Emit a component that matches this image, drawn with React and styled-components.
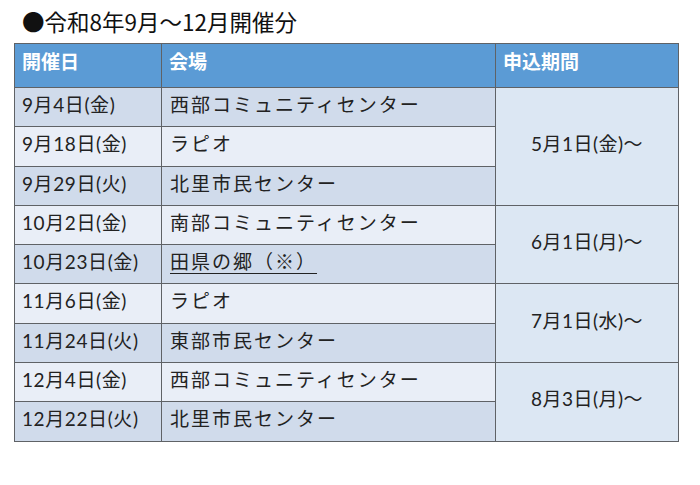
import React from "react";
import styled, { createGlobalStyle } from "styled-components";

const GlobalStyle = createGlobalStyle`
  body {
    margin: 0;
    background: #fff;
    font-family: "Noto Sans CJK JP", sans-serif;
  }
`;

const Page = styled.div`
  padding: 5px 0 0 14px;
  width: 700px;
  box-sizing: border-box;
`;

const Heading = styled.h1`
  margin: 0 0 6px 8px;
  font-size: 22.5px;
  line-height: 32px;
  font-weight: 400;
  color: #111;
`;

const Table = styled.table`
  border-collapse: collapse;
  width: 664px;
  table-layout: fixed;
  border: 1px solid #5f6266;
`;

const Th = styled.th`
  background: #5b9bd5;
  color: #fff;
  font-size: 19px;
  font-weight: 700;
  text-align: left;
  vertical-align: top;
  height: 44px;
  padding: 3px 0 0 7px;
  box-sizing: border-box;
  border: 1px solid #5f6266;
`;

const Td = styled.td`
  background: ${(p) => (p.$dark ? "#d0dbeb" : "#e9eef7")};
  color: #222;
  font-size: 19px;
  text-align: left;
  vertical-align: top;
  height: 39.3px;
  padding: 2px 0 0 7px;
  box-sizing: border-box;
  border: 1px solid #5f6266;
  white-space: nowrap;
`;

const DateCell = styled(Td)`
  font-family: Lato, "Noto Sans CJK JP", sans-serif;
  letter-spacing: 0.6px;
`;

const VenueCell = styled(Td)`
  letter-spacing: 2px;
  padding-left: 8px;
`;

const PeriodCell = styled.td`
  background: #dce7f3;
  color: #222;
  font-family: Lato, "Noto Sans CJK JP", sans-serif;
  font-size: 19px;
  text-align: center;
  vertical-align: middle;
  padding: 0 0 8px;
  border: 1px solid #5f6266;
  letter-spacing: 0.5px;
`;

const Underlined = styled.span`
  text-decoration: underline;
  text-underline-offset: 4px;
  text-decoration-thickness: 1px;
`;

const groups = [
  {
    period: "5月1日(金)～",
    rows: [
      ["9月4日(金)", "西部コミュニティセンター"],
      ["9月18日(金)", "ラピオ"],
      ["9月29日(火)", "北里市民センター"],
    ],
  },
  {
    period: "6月1日(月)～",
    rows: [
      ["10月2日(金)", "南部コミュニティセンター"],
      ["10月23日(金)", "田県の郷（※）", true],
    ],
  },
  {
    period: "7月1日(水)～",
    rows: [
      ["11月6日(金)", "ラピオ"],
      ["11月24日(火)", "東部市民センター"],
    ],
  },
  {
    period: "8月3日(月)～",
    rows: [
      ["12月4日(金)", "西部コミュニティセンター"],
      ["12月22日(火)", "北里市民センター"],
    ],
  },
];

export default function App() {
  let index = 0;
  return (
    <Page>
      <GlobalStyle />
      <Heading>●令和8年9月～12月開催分</Heading>
      <Table>
        <colgroup>
          <col style={{ width: 147 }} />
          <col style={{ width: 334 }} />
          <col style={{ width: 183 }} />
        </colgroup>
        <thead>
          <tr>
            <Th>開催日</Th>
            <Th>会場</Th>
            <Th>申込期間</Th>
          </tr>
        </thead>
        <tbody>
          {groups.map((g) =>
            g.rows.map(([date, venue, note], i) => {
              const dark = index % 2 === 0;
              index += 1;
              return (
                <tr key={date}>
                  <DateCell $dark={dark}>{date}</DateCell>
                  <VenueCell $dark={dark}>
                    {note ? <Underlined>{venue}</Underlined> : venue}
                  </VenueCell>
                  {i === 0 && (
                    <PeriodCell rowSpan={g.rows.length}>{g.period}</PeriodCell>
                  )}
                </tr>
              );
            })
          )}
        </tbody>
      </Table>
    </Page>
  );
}
